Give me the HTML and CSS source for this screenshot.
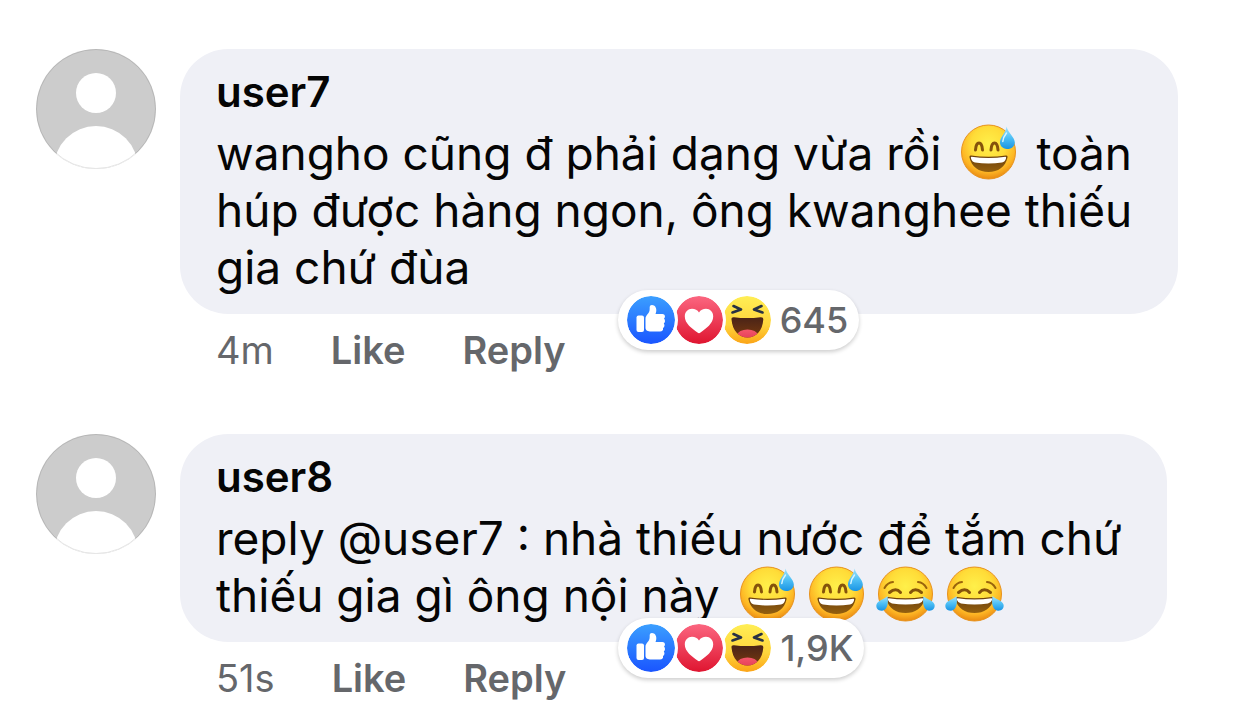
FILE: index.html
```html
<!DOCTYPE html>
<html lang="vi">
<head>
    <meta charset="UTF-8">
    <meta name="viewport" content="width=device-width, initial-scale=1.0">
    <title>Comments</title>
    <link rel="stylesheet" href="styles.css">
</head>
<body>
    <!-- shared icons -->
    <svg class="sprite" width="0" height="0" aria-hidden="true">
        <defs>
            <radialGradient id="face" cx="0.5" cy="0.36" r="0.64">
                <stop offset="0" stop-color="#fff04a"/>
                <stop offset="0.5" stop-color="#ffdc38"/>
                <stop offset="0.8" stop-color="#fdb524"/>
                <stop offset="1" stop-color="#e98a12"/>
            </radialGradient>
            <linearGradient id="mouth" x1="0" y1="0" x2="0" y2="1">
                <stop offset="0" stop-color="#6b3f0c"/>
                <stop offset="1" stop-color="#94600f"/>
            </linearGradient>
            <linearGradient id="drop" x1="0" y1="0" x2="0" y2="1">
                <stop offset="0" stop-color="#a5e3fb"/>
                <stop offset="0.5" stop-color="#4fc0f5"/>
                <stop offset="1" stop-color="#1a94e4"/>
            </linearGradient>
            <linearGradient id="blue" x1="0" y1="0" x2="0" y2="1">
                <stop offset="0" stop-color="#3b9fff"/>
                <stop offset="1" stop-color="#1a55ff"/>
            </linearGradient>
            <linearGradient id="red" x1="0" y1="0" x2="0" y2="1">
                <stop offset="0" stop-color="#fb6680"/>
                <stop offset="1" stop-color="#df1530"/>
            </linearGradient>
            <linearGradient id="yellow" x1="0" y1="0" x2="0" y2="1">
                <stop offset="0" stop-color="#ffee55"/>
                <stop offset="0.6" stop-color="#ffd53c"/>
                <stop offset="1" stop-color="#fba417"/>
            </linearGradient>
            <linearGradient id="laugh" x1="0" y1="0" x2="0" y2="1">
                <stop offset="0" stop-color="#472218"/>
                <stop offset="1" stop-color="#783a0e"/>
            </linearGradient>
            <linearGradient id="tongue" x1="0" y1="0" x2="0" y2="1">
                <stop offset="0" stop-color="#f4566a"/>
                <stop offset="1" stop-color="#e23a56"/>
            </linearGradient>
            <clipPath id="round"><circle cx="60" cy="60" r="60"/></clipPath>
            <clipPath id="laughClip"><path d="M8.5 23.5Q8.200 21 11 21.200Q24 23 37.500 21.200Q40.500 21 40.300 23.500C39.500 35 33 41.500 24.500 41.500S9.500 35 8.500 23.500Z"/></clipPath>
        </defs>

        <symbol id="avatar" viewBox="0 0 120 120">
            <g clip-path="url(#round)">
                <rect width="120" height="120" fill="#ccc"/>
                <circle cx="60" cy="44" r="20" fill="#fff"/>
                <circle cx="60" cy="119" r="42" fill="#fff"/>
            </g>
            <circle cx="60" cy="60" r="59.5" fill="none" stroke="#000" stroke-opacity="0.1"/>
        </symbol>

        <symbol id="sweat" viewBox="0 0 69 60">
            <circle cx="34.500" cy="30" r="27" fill="url(#face)" stroke="#e8921c"/>
            <path d="M21.500 28C22 18.500 28 18.500 28.500 28M37 28C37.500 18.500 43.500 18.500 44 28" fill="none" stroke="#85530b" stroke-width="3" stroke-linecap="round"/>
            <path d="M17 33.500Q34.500 36 52 33.500Q54 33.300 53.500 35.500C51.500 45 44 50 34.500 50S17.500 45 15.500 35.500Q15 33.300 17 33.500Z" fill="url(#mouth)"/>
            <path d="M17.500 34.700Q34.500 37.300 51.500 34.700Q52.500 34.700 52 36.500Q51 40 48 40.500Q34.500 42.500 21 40.500Q18 40 17 36.500Q16.500 34.700 17.500 34.700Z" fill="#fff"/>
            <path d="M52.500 4.500C54 11 61 15.500 60.800 20.500C60.500 24.500 57.500 27.200 53 27C48.500 26.800 45.500 23.500 46 19.500C46.500 15 52 10.500 52.500 4.500Z" fill="url(#drop)"/>
            <path d="M52.500 11Q49 15.500 48.800 19.500" fill="none" stroke="#d7f4ff" stroke-width="1.500" stroke-linecap="round"/>
        </symbol>

        <symbol id="joy" viewBox="0 0 69 60">
            <circle cx="34.500" cy="30" r="27" fill="url(#face)" stroke="#e8921c"/>
            <path d="M13.500 24Q16.500 18.500 22 18M47 18Q52.500 18.500 55.500 24" fill="none" stroke="#9a640c" stroke-width="2" stroke-linecap="round"/>
            <path d="M18.500 28.500Q25 23 29.500 28.500M39.500 28.500Q44 23 50.500 28.500" fill="none" stroke="#85530b" stroke-width="3" stroke-linecap="round"/>
            <path d="M17 33Q34.500 35.500 52 33Q54 32.800 53.500 35C51.500 44.500 44 49 34.500 49S17.500 44.500 15.500 35Q15 32.800 17 33Z" fill="url(#mouth)"/>
            <path d="M17.500 34.200Q34.500 36.800 51.500 34.200Q52.500 34.200 52 36Q51 39 48 39.500Q34.500 41.500 21 39.500Q18 39 17 36Q16.500 34.200 17.500 34.200Z" fill="#fff"/>
            <path d="M16.500 32C17.500 38 17 45 12 46.500C8 47.500 4.500 44.500 5.500 40.500C6.500 36.500 13 35.500 16.500 32Z" fill="url(#drop)"/>
            <path d="M52.500 32C51.500 38 52 45 57 46.500C61 47.500 64.500 44.500 63.500 40.500C62.500 36.500 56 35.500 52.500 32Z" fill="url(#drop)"/>
        </symbol>

        <symbol id="like" viewBox="0 0 48 48">
            <circle cx="24" cy="24" r="24" fill="url(#blue)"/>
            <rect x="9.500" y="19.500" width="7.500" height="16.500" rx="2" fill="#fff"/>
            <path d="M18.500 22.500C18.500 19 23 17.500 22.700 12.500C22.500 10 23.200 9 25 9C28 9 29.500 12 29.300 14.500C29.200 16.500 28.500 18 28.500 18H35.500C38 18 38.800 21 37 22.500C38.500 24 38.300 26.500 36.800 27.500C38 29 37.500 31.200 36 32C36.500 34 35.300 35.500 33 35.500H24C21 35.500 18.500 34.500 18.500 32Z" fill="#fff"/>
        </symbol>

        <symbol id="love" viewBox="0 0 48 48">
            <circle cx="24" cy="24" r="24" fill="url(#red)"/>
            <path d="M24 16.500C25.500 14 28 12.800 31 12.800C35 12.800 38.200 16 38.200 20.500C38.200 27.500 31 32.500 25.500 36.600Q24 37.800 22.500 36.600C17 32.500 9.800 27.500 9.800 20.500C9.800 16 13 12.800 17 12.800C20 12.800 22.500 14 24 16.500Z" fill="#fff"/>
        </symbol>

        <symbol id="haha" viewBox="0 0 48 48">
            <circle cx="24" cy="24" r="24" fill="url(#yellow)"/>
            <path d="M10.500 10L18 13.500L9.500 16.500M38.500 10L31 13.500L39.500 16.500" fill="none" stroke="#283244" stroke-width="2.600" stroke-linecap="round" stroke-linejoin="round"/>
            <g clip-path="url(#laughClip)">
                <rect x="8" y="20" width="33" height="22" fill="url(#laugh)"/>
                <ellipse cx="24.500" cy="39" rx="10" ry="5.500" fill="url(#tongue)"/>
            </g>
        </symbol>
    </svg>

    <main id="comments">
        <article class="comment">
            <svg class="avatar" role="img" aria-label="user7"><use href="#avatar"/></svg>
            <div class="body">
                <div class="bubble">
                    <a class="name" href="#">user7</a>
                    <p class="text">wangho cũng đ phải dạng vừa rồi <svg class="emoji"><use href="#sweat"/></svg> toàn<br>húp được hàng ngon, ông kwanghee thiếu<br>gia chứ đùa</p>
                </div>
                <div class="actions">
                    <span class="time">4m</span>
                    <button type="button">Like</button>
                    <button type="button">Reply</button>
                    <div class="reactions">
                        <svg class="reaction"><use href="#like"/></svg>
                        <svg class="reaction"><use href="#love"/></svg>
                        <svg class="reaction"><use href="#haha"/></svg>
                        <span class="count">645</span>
                    </div>
                </div>
            </div>
        </article>

        <article class="comment">
            <svg class="avatar" role="img" aria-label="user8"><use href="#avatar"/></svg>
            <div class="body">
                <div class="bubble">
                    <a class="name" href="#">user8</a>
                    <p class="text">reply @user7 : nhà thiếu nước để tắm chứ<br>thiếu gia gì ông nội này <svg class="emoji"><use href="#sweat"/></svg><svg class="emoji"><use href="#sweat"/></svg><svg class="emoji"><use href="#joy"/></svg><svg class="emoji"><use href="#joy"/></svg></p>
                </div>
                <div class="actions">
                    <span class="time">51s</span>
                    <button type="button">Like</button>
                    <button type="button">Reply</button>
                    <div class="reactions">
                        <svg class="reaction"><use href="#like"/></svg>
                        <svg class="reaction"><use href="#love"/></svg>
                        <svg class="reaction"><use href="#haha"/></svg>
                        <span class="count">1,9K</span>
                    </div>
                </div>
            </div>
        </article>
    </main>
</body>
</html>
```
FILE: styles.css
```css
* {
    box-sizing: border-box;
}
body {
    margin: 0;
    background: #fff;
    color: #050505;
    font-family: Inter, Roboto, sans-serif;
}
.sprite {
    position: absolute;
}
#comments {
    display: flex;
    flex-direction: column;
    gap: 60px;
    padding: 49px 36px 0;
}
.comment {
    display: flex;
    align-items: flex-start;
    gap: 24px;
}
.avatar {
    width: 120px;
    height: 120px;
    flex-shrink: 0;
}
.body {
    flex: 1;
    min-width: 0;
}
.bubble {
    width: fit-content;
    padding: 18px 46px 18px 36px;
    border-radius: 48px;
    background: #eff0f6;
}
.name {
    display: block;
    margin-bottom: 8px;
    font-size: 42px;
    font-weight: 600;
    line-height: 50px;
    color: inherit;
    text-decoration: none;
}
.text {
    margin: 0;
    font-size: 46px;
    line-height: 57px;
}
.emoji {
    width: 69px;
    height: 60px;
    margin: -16px 0 -6px;
    vertical-align: middle;
}
.actions {
    display: flex;
    align-items: flex-start;
    gap: 57px;
    height: 48px;
    margin-top: 12px;
    padding-left: 36px;
    font-size: 38px;
    line-height: 48px;
    color: #65676b;
}
.actions button {
    padding: 0;
    border: 0;
    background: none;
    font: inherit;
    font-weight: 600;
    color: inherit;
    cursor: pointer;
}
.reactions {
    position: relative;
    display: flex;
    align-items: center;
    height: 60px;
    margin: -36px 0 0 -5px;
    padding: 0 11px 0 9px;
    border-radius: 30px;
    background: #fff;
    box-shadow: 0 2px 4px rgba(0, 0, 0, 0.2);
}
.reaction {
    position: relative;
    width: 48px;
    height: 48px;
    border-radius: 50%;
    box-shadow: 0 0 0 3px #fff;
}
.reaction:nth-child(1) {
    z-index: 3;
}
.reaction:nth-child(2) {
    z-index: 2;
}
.reaction:nth-child(3) {
    z-index: 1;
}
.count {
    margin-left: 9px;
    font-size: 36px;
    font-weight: 500;
}
```
